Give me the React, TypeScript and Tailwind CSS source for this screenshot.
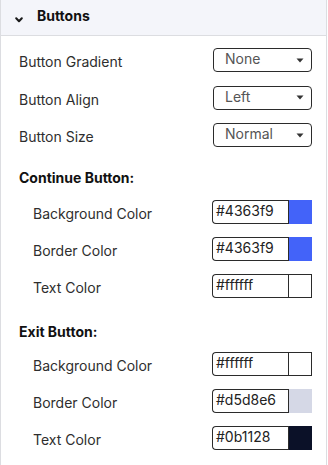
import React from "react";

type SelectRow = { label: string; value: string };
type ColorRow = { label: string; hex: string; ring?: boolean };

const selects: SelectRow[] = [
  { label: "Button Gradient", value: "None" },
  { label: "Button Align", value: "Left" },
  { label: "Button Size", value: "Normal" },
];

const continueColors: ColorRow[] = [
  { label: "Background Color", hex: "#4363f9" },
  { label: "Border Color", hex: "#4363f9" },
  { label: "Text Color", hex: "#ffffff", ring: true },
];

const exitColors: ColorRow[] = [
  { label: "Background Color", hex: "#ffffff", ring: true },
  { label: "Border Color", hex: "#d5d8e6" },
  { label: "Text Color", hex: "#0b1128" },
];

function Caret() {
  return (
    <svg width="8" height="5" viewBox="0 0 8 5" className="shrink-0">
      <path d="M0.5 0.5h7L4 4.5z" fill="#333" />
    </svg>
  );
}

function SelectBox({ value }: { value: string }) {
  return (
    <div className="flex h-6 w-[99px] items-center justify-between rounded border border-[#2b2b2b] pl-[11px] pr-[7px] text-[14px] leading-none text-[#555]">
      <span className="-mt-[2px]">{value}</span>
      <Caret />
    </div>
  );
}

function ColorBox({ hex, ring }: { hex: string; ring?: boolean }) {
  return (
    <div className="flex h-6 w-[100px]">
      <div className="flex flex-1 items-center rounded-l border border-r-0 border-[#2b2b2b] pl-[3px] text-[14px] leading-none text-[#222]">
        <span className="-mt-[2px]">{hex}</span>
      </div>
      <div className="w-px bg-[#2b2b2b]" />
      <div
        className={ring ? "w-[23px] border border-l-0 border-[#2b2b2b]" : "w-[23px]"}
        style={{ background: hex }}
      />
    </div>
  );
}

function Label({ text, indent }: { text: string; indent?: boolean }) {
  return (
    <span className={`mt-[4px] text-[14px] leading-5 text-[#2e2e2e] ${indent ? "pl-[14px]" : ""}`}>
      {text}
    </span>
  );
}

export default function App() {
  return (
    <div
      className="h-[465px] w-[327px] border-x border-[#dcdde1] bg-white"
      style={{ fontFamily: "Inter, 'Liberation Sans', sans-serif" }}
    >
      <div className="flex h-[36px] items-center gap-[14px] border-b border-[#dcdde1] bg-[#f4f5fa] pl-[14px]">
        <svg width="8" height="6" viewBox="0 0 8 6" className="mt-[5px]">
          <path d="M1.2 1.2L4 4.2l2.8-3" fill="none" stroke="#1a1a1a" strokeWidth="2" strokeLinecap="round" strokeLinejoin="round" />
        </svg>
        <span className="-mt-[4px] text-[14px] font-bold text-[#111]">Buttons</span>
      </div>

      <div className="flex flex-col pl-[18px] pr-[14px]">
        <div className="mt-[12px] flex flex-col gap-[13.5px]">
          {selects.map((s) => (
            <div key={s.label} className="flex items-center justify-between">
              <Label text={s.label} />
              <SelectBox value={s.value} />
            </div>
          ))}
        </div>

        <div className="mt-[21px] text-[14px] font-bold leading-5 text-[#111]">Continue Button:</div>
        <div className="mt-[12px] flex flex-col gap-[13px]">
          {continueColors.map((c) => (
            <div key={c.label} className="flex items-center justify-between">
              <Label text={c.label} indent />
              <ColorBox hex={c.hex} ring={c.ring} />
            </div>
          ))}
        </div>

        <div className="mt-[24px] text-[14px] font-bold leading-5 text-[#111]">Exit Button:</div>
        <div className="mt-[10px] flex flex-col gap-[13px]">
          {exitColors.map((c) => (
            <div key={c.label} className="flex items-center justify-between">
              <Label text={c.label} indent />
              <ColorBox hex={c.hex} ring={c.ring} />
            </div>
          ))}
        </div>
      </div>
    </div>
  );
}
